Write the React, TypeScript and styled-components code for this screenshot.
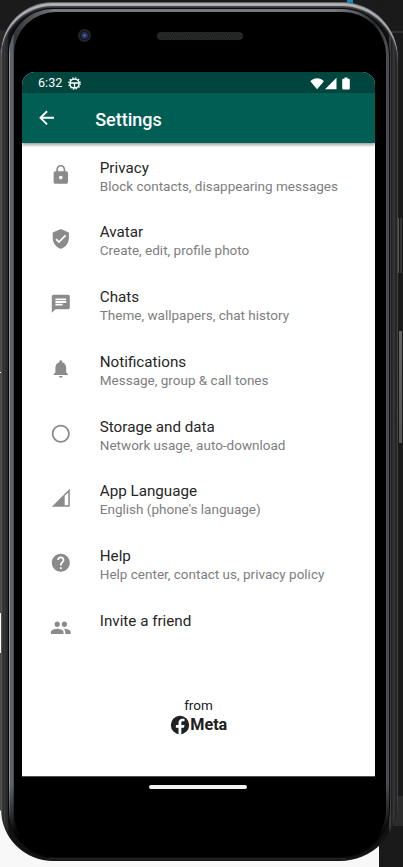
import React from "react";
import styled, { createGlobalStyle } from "styled-components";
import type { IconType } from "react-icons";
import {
  MdChat,
  MdGroup,
  MdHelp,
  MdLock,
  MdNotifications,
  MdRadioButtonUnchecked,
  MdVerifiedUser,
} from "react-icons/md";

const GlobalStyle = createGlobalStyle`
  * { box-sizing: border-box; }
  body { margin: 0; overflow: hidden; font-family: Roboto, sans-serif; }
`;

const Desk = styled.div`
  width: 403px;
  height: 867px;
  padding: 2px 5px 5px 1px;
  background:
    linear-gradient(#1687c0, #1687c0) 347px 0 / 6px 3px no-repeat,
    linear-gradient(#303030, #303030) 370px 31px / 33px 2px no-repeat,
    linear-gradient(#f8f8f8, #f8f8f8) 0 613px / 1px 40px no-repeat,
    linear-gradient(#f8f8f8, #f8f8f8) 0 372px / 1px 1px no-repeat,
    linear-gradient(#555, #555) 398px 218px / 1px 55px no-repeat,
    linear-gradient(#333, #333) 400px 218px / 2px 55px no-repeat,
    linear-gradient(#666, #555) 399px 331px / 3px 112px no-repeat,
    linear-gradient(#2c2c2c, #2c2c2c) 379px 796px / 24px 30px no-repeat,
    linear-gradient(#1a1a1a, #1a1a1a) 379px 0 / 24px 867px no-repeat,
    linear-gradient(#1b1b1b 30px, #292929 31px 49px, #4a4a4a 50px 810px, #f8f8f8 811px);
`;

const Shell = styled.div`
  height: 859px;
  padding: 7px 9px 4px 8px;
  border-radius: 51px 56px 58px 52px;
  background:
    linear-gradient(#292929, #292929) 48px 855px / 297px 3px no-repeat,
    linear-gradient(90deg, #555 0 1px, #202020 2px, #393939 3px 4px, #202020 5px, #363636 6px, #171717 7px 8px, #111 9px 388px, #5a5b5e 389px, #202020 390px 391px, #343434 392px 394px, #171717 395px, #353535 396px);
  box-shadow:
    inset 0 1px 1px #55565a,
    inset 0 4px 1px #b4b5b8,
    inset 0 6px 2px #414246,
    inset 0 -2px 1px #181818;
`;

const Rim = styled.div`
  height: 848px;
  padding: 3px 3px 0 5px;
  border-radius: 44px 47px 49px 46px;
  background:
    linear-gradient(transparent 775px, #000 830px),
    linear-gradient(90deg, #909398 0 1px, #5d636c 1px 4px, #303339 5px, #77787c 45px 325px, #606166 345px, #25262a 365px, #4b4d52 377px 379px);
  box-shadow: 0 0 0 1px #08090a;
`;

const Glass = styled.div`
  height: 844px;
  padding: 59px 10px 0 8px;
  border-radius: 42px 43px 47px 44px;
  background: #000;
`;

const Sensors = styled.div`
  display: flex;
  align-items: center;
  height: 14px;
  margin: -43px 0 30px;
  padding-left: 56px;
`;

const Lens = styled.div`
  width: 13px;
  height: 13px;
  border-radius: 50%;
  background: radial-gradient(circle, #4b5c8c 0 1px, #252e5c 2px 3px, #10121f 4px, #252526 5px 6px);
`;

const Speaker = styled.div`
  width: 86px;
  height: 8px;
  margin: 1px 0 0 66px;
  border-radius: 4px;
  background: repeating-linear-gradient(60deg, #202121 0 1px, #292a2a 1px 2px);
`;

const Screen = styled.div`
  width: 353px;
  height: 705px;
  overflow: hidden;
  border-radius: 13px 13px 0 0;
  background: #fff;
  border-bottom: 1px solid #505050;
`;

const StatusBar = styled.div`
  display: flex;
  align-items: center;
  height: 21px;
  padding: 1px 24px 0 16px;
  background: #00453e;
  color: #fff;
`;

const Clock = styled.span`
  width: 30px;
  font-size: 12.6px;
  line-height: 20px;
`;

const StatusIcons = styled.div`
  display: flex;
  align-items: center;
  margin-left: auto;
`;

const AppBar = styled.header`
  display: flex;
  align-items: center;
  height: 50px;
  padding-left: 14.4px;
  background: #005e54;
  color: #fff;
  box-shadow: 0 2px 3px rgba(0, 0, 0, 0.38);
  svg { width: 21.6px; height: 21.6px; }
`;

const PageTitle = styled.h1`
  margin: 2px 0 0 37.2px;
  font-size: 18px;
  font-weight: 500;
  letter-spacing: 0;
`;

const List = styled.ul`
  height: 518.5px;
  margin: 0;
  padding: 0;
  list-style: none;
`;

const Row = styled.li`
  display: flex;
  height: 64.7px;
  padding: 15.8px 0 0 27.5px;
`;

const RowIcon = styled.div`
  width: 21.6px;
  height: 21.6px;
  margin: 5px 28.7px 0 0;
  color: #8b8b8b;
  svg { display: block; width: 21.6px; height: 21.6px; }
`;

const Label = styled.div`
  color: #262626;
  font-size: 15.2px;
  line-height: 19px;
  white-space: nowrap;
`;

const Detail = styled.div`
  color: #7e7e7e;
  font-size: 13.5px;
  line-height: 17px;
  white-space: nowrap;
`;

const Footer = styled.footer`
  display: flex;
  flex-direction: column;
  align-items: center;
  padding-top: 34.5px;
  color: #202020;
  font-size: 13.5px;
  line-height: 18px;
`;

const Brand = styled.div`
  display: flex;
  align-items: center;
  gap: 0.5px;
  margin-top: 1px;
  font-size: 16.2px;
  font-weight: 700;
  line-height: 20px;
`;

const HomeBar = styled.div`
  width: 98px;
  height: 4px;
  margin: 8px auto 0 127px;
  border-radius: 2px;
  background: #f3f3f3;
`;

const BackIcon = () => (
  <svg viewBox="0 0 24 24" fill="none" stroke="currentColor" strokeWidth="2.1">
    <path d="M20 12H5.2M12.3 4.7 5 12l7.3 7.3" />
  </svg>
);

const DebugIcon = () => (
  <svg width="13" height="13" viewBox="0 0 13 13" fill="none" stroke="currentColor">
    <circle cx="6.5" cy="6.5" r="4.6" strokeWidth="1.5" />
    <circle cx="6.5" cy="6.5" r="5.7" strokeWidth="1.3" strokeDasharray="1.4 1.58" />
    <path d="M2 6h9M6.5 6v5" strokeWidth="1.3" />
  </svg>
);

const Signals = () => (
  <svg width="41" height="13" viewBox="0 0 41 13" fill="currentColor">
    <path d="M.3 4.2C3.8.1 10.4.1 13.9 4.2L7.1 12.3z" />
    <path d="M15 12.2 26.5.8v11.4z" />
    <path d="M34.5.6h3v1.2H39q.8 0 .8.8v9q0 .8-.8.8h-6q-.8 0-.8-.8v-9q0-.8.8-.8h1.5z" />
  </svg>
);

const CellularIcon = () => (
  <svg viewBox="0 0 24 24" fill="currentColor">
    <path d="M2 22h20V2L2 22zm14.3-1.8V9.7L20.3 6V20.2z" fillRule="evenodd" />
  </svg>
);

const BrandMark = () => (
  <svg width="20" height="20" viewBox="0 0 24 24">
    <circle cx="12" cy="12" r="11" fill="#202124" />
    <path d="M10.2 23.5v-8.2H7V12h3.2V9.7c0-3.4 1.8-5.3 4.9-5.3h2.3v3.2h-1.8c-1.4 0-2 .7-2 1.9V12h3.8l-.6 3.3h-3.2v8.2z" fill="#fff" />
  </svg>
);

type Item = { label: string; detail?: string; icon: IconType | React.FC };

const items: Item[] = [
  { label: "Privacy", detail: "Block contacts, disappearing messages", icon: MdLock },
  { label: "Avatar", detail: "Create, edit, profile photo", icon: MdVerifiedUser },
  { label: "Chats", detail: "Theme, wallpapers, chat history", icon: MdChat },
  { label: "Notifications", detail: "Message, group & call tones", icon: MdNotifications },
  { label: "Storage and data", detail: "Network usage, auto-download", icon: MdRadioButtonUnchecked },
  { label: "App Language", detail: "English (phone's language)", icon: CellularIcon },
  { label: "Help", detail: "Help center, contact us, privacy policy", icon: MdHelp },
  { label: "Invite a friend", icon: MdGroup },
];

export default function App() {
  return (
    <Desk>
      <GlobalStyle />
      <Shell>
        <Rim>
          <Glass>
            <Sensors>
              <Lens />
              <Speaker />
            </Sensors>
            <Screen>
              <StatusBar>
                <Clock>6:32</Clock>
                <DebugIcon />
                <StatusIcons>
                  <Signals />
                </StatusIcons>
              </StatusBar>
              <AppBar>
                <BackIcon />
                <PageTitle>Settings</PageTitle>
              </AppBar>
              <List>
                {items.map(({ label, detail, icon: Icon }) => (
                  <Row key={label}>
                    <RowIcon>
                      <Icon />
                    </RowIcon>
                    <div>
                      <Label>{label}</Label>
                      {detail && <Detail>{detail}</Detail>}
                    </div>
                  </Row>
                ))}
              </List>
              <Footer>
                <span>from</span>
                <Brand>
                  <BrandMark />
                  <span>Meta</span>
                </Brand>
              </Footer>
            </Screen>
            <HomeBar />
          </Glass>
        </Rim>
      </Shell>
    </Desk>
  );
}
